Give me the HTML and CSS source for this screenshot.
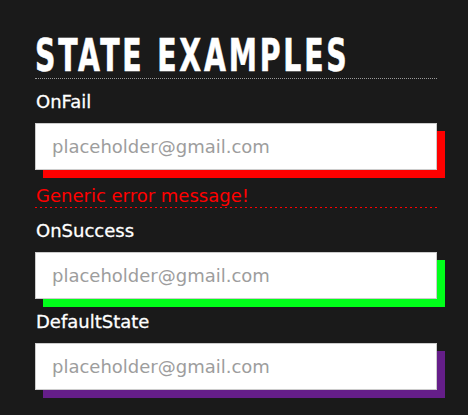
FILE: index.html
```html
<!DOCTYPE html>
<html lang="en">
<head>
<meta charset="utf-8">
<title>State Examples</title>
<link rel="stylesheet" href="styles.css">
</head>
<body>
<main class="page">
  <h1 class="title"><span class="title-text">STATE EXAMPLES</span></h1>

  <div class="field">
    <label class="label" for="f1">OnFail</label>
    <input id="f1" class="input input-fail" type="email" placeholder="placeholder@gmail.com">
    <p class="error">Generic error message!</p>
  </div>

  <div class="field">
    <label class="label" for="f2">OnSuccess</label>
    <input id="f2" class="input input-success" type="email" placeholder="placeholder@gmail.com">
  </div>

  <div class="field">
    <label class="label" for="f3">DefaultState</label>
    <input id="f3" class="input input-default" type="email" placeholder="placeholder@gmail.com">
  </div>
</main>
</body>
</html>
```

FILE: styles.css
```css
html, body {
  margin: 0;
  padding: 0;
  background: #1a1a1a;
}

.page {
  width: 402px;
  padding: 33px 0 30px 35px;
  font-family: "DejaVu Sans", sans-serif;
}

.title {
  margin: 0;
  height: 45px;
  border-bottom: 1px dotted #9a9a9a;
  font-family: "DejaVu Sans", sans-serif;
  font-stretch: condensed;
  font-weight: bold;
  font-size: 45px;
  line-height: 46px;
  color: #ffffff;
  white-space: nowrap;
}

.title-text {
  display: inline-block;
  letter-spacing: 4px;
  -webkit-text-stroke: 0.6px #ffffff;
  transform: scaleX(0.7);
  transform-origin: left center;
}

.field {
  display: flex;
  flex-direction: column;
}

.label {
  display: block;
  color: #ffffff;
  font-size: 18px;
  line-height: 20px;
  margin: 13px 0 11px 1px;
  -webkit-text-stroke: 0.3px #ffffff;
}

.input {
  box-sizing: border-box;
  width: 402px;
  height: 47px;
  margin: 0;
  padding: 0 0 0 16px;
  border: 1px solid #cccccc;
  background: #ffffff;
  font-family: "DejaVu Sans", sans-serif;
  font-size: 18px;
  color: #333;
  outline: none;
}

.input::placeholder {
  color: #9d9d9d;
}

.input-fail { box-shadow: 8px 8px 0 #ff0000; }
.input-success { box-shadow: 8px 8px 0 #00ff1a; }
.input-default { box-shadow: 8px 8px 0 #651e89; }

.error {
  margin: 16px 0 0;
  padding: 0 0 2px 1px;
  color: #ff0000;
  font-size: 18px;
  line-height: 20px;
  background-image: repeating-linear-gradient(to right, #ff0000 0 2px, transparent 2px 5px);
  background-size: 100% 1px;
  background-position: left bottom;
  background-repeat: no-repeat;
}
```
